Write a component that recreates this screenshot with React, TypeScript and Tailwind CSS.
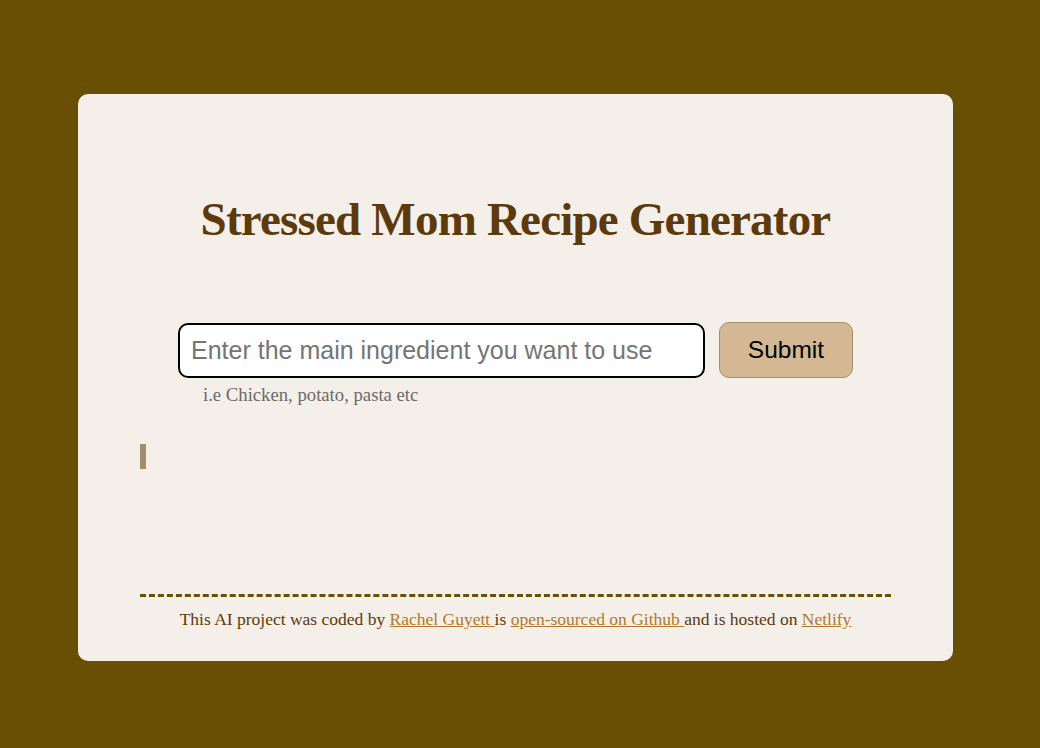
import React from "react";

export default function App() {
  return (
    <div className="min-h-[748px] w-full bg-[#684f04] pt-[94px] pb-[87px]">
      <div className="ml-[78px] w-[875px] h-[567px] rounded-[10px] bg-[#f4efe8] px-[62px] flex flex-col">
        <h1
          className="mt-[97px] text-center text-[47px] leading-[56px] tracking-[-0.8px] font-bold text-[#5c3a0c]"
          style={{ fontFamily: '"Liberation Serif", "Times New Roman", serif' }}
        >
          Stressed Mom Recipe Generator
        </h1>
        <form
          className="mt-[75px] flex items-center justify-center gap-[14px]"
          onSubmit={(e) => e.preventDefault()}
        >
          <input
            type="search"
            placeholder="Enter the main ingredient you want to use"
            className="w-[527px] h-[55px] rounded-[10px] border-2 border-black bg-white px-[11px] text-[25px] text-black placeholder:text-[#757575] outline-none"
            style={{ fontFamily: '"Liberation Sans", Arial, sans-serif' }}
          />
          <button
            type="submit"
            className="w-[134px] h-[56px] rounded-[10px] border border-[#a38e6b] bg-[#d3b893] text-[24.5px] text-black"
            style={{ fontFamily: '"Liberation Sans", Arial, sans-serif' }}
          >
            Submit
          </button>
        </form>
        <div
          className="mt-[6px] ml-[63px] text-[18.7px] leading-[22px] text-[#6b6b6b]"
          style={{ fontFamily: '"Liberation Serif", "Times New Roman", serif' }}
        >
          i.e Chicken, potato, pasta etc
        </div>
        <div className="mt-[38px] h-[25px] w-[6px] bg-[#a38e6b]" />
        <div className="mt-auto mb-[32px]">
          <div className="border-t-[3px] border-dashed border-[#6b5002]" />
          <p
            className="mt-[12px] text-center text-[17.5px] leading-[20px] text-[#5c3a0c]"
            style={{ fontFamily: '"Liberation Serif", "Times New Roman", serif' }}
          >
            This AI project was coded by{" "}
            <a href="#" className="underline text-[#b07a2a]">
              Rachel Guyett{" "}
            </a>
            is{" "}
            <a href="#" className="underline text-[#b07a2a]">
              open-sourced on Github{" "}
            </a>
            and is hosted on{" "}
            <a href="#" className="underline text-[#b07a2a]">
              Netlify
            </a>
          </p>
        </div>
      </div>
    </div>
  );
}
